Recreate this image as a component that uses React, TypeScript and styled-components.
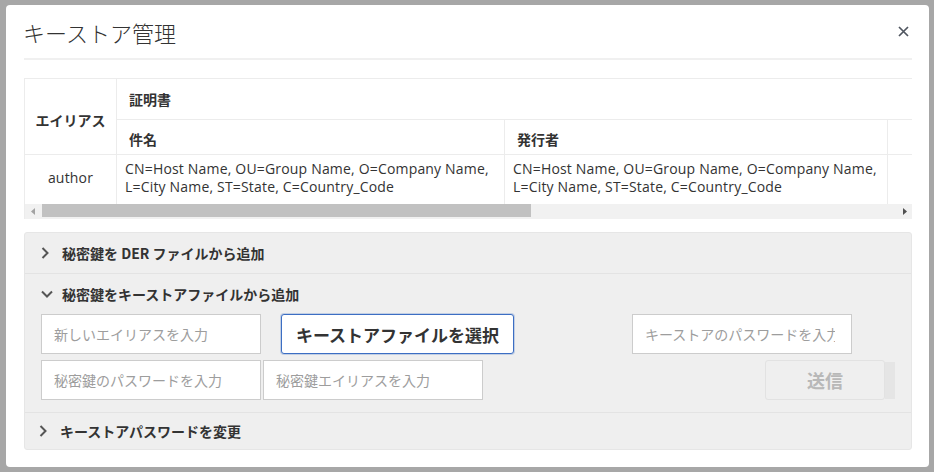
import React from 'react';
import styled, { createGlobalStyle } from 'styled-components';

const GlobalStyle = createGlobalStyle`
  html, body {
    margin: 0;
    padding: 0;
  }
  body {
    width: 934px;
    height: 472px;
    overflow: hidden;
    background: #a7a7a7;
    color: #333333;
    font-family: 'Open Sans', 'Noto Sans CJK JP', sans-serif;
  }
`;

const JP = `'Noto Sans CJK JP', 'Open Sans', sans-serif`;

const Backdrop = styled.div`
  padding: 5px 0 0 6px;
`;

const Modal = styled.div`
  width: 923px;
  height: 462px;
  box-sizing: border-box;
  padding: 0 17px 0 18px;
  background: #ffffff;
  border-radius: 4px;
  display: flex;
  flex-direction: column;
  overflow: hidden;
`;

const Header = styled.div`
  height: 53px;
  display: flex;
  align-items: center;
  justify-content: space-between;
  border-bottom: 2px solid #f0f0f0;
`;

const Title = styled.h2`
  margin: 0 0 0 -1px;
  font-family: ${JP};
  font-size: 22px;
  font-weight: 300;
  color: #333333;
`;

const CloseButton = styled.button`
  display: flex;
  margin-right: 3px;
  padding: 0;
  border: 0;
  background: none;
  cursor: pointer;
`;

const TableViewport = styled.div`
  margin-top: 18px;
  border-top: 1px solid #ececec;
  border-left: 1px solid #ececec;
  overflow: hidden;
`;

const Table = styled.table`
  width: 1560px;
  table-layout: fixed;
  border-collapse: separate;
  border-spacing: 0;
`;

const HeadCell = styled.th<{ $h?: number; $top?: number; $center?: boolean }>`
  height: ${({ $h }) => $h ?? 40}px;
  padding: ${({ $top }) => $top ?? 0}px ${({ $center }) => ($center ? 0 : 12)}px 0;
  box-sizing: content-box;
  border-right: 1px solid #ececec;
  border-bottom: 1px solid #ececec;
  font-family: ${JP};
  font-size: 14px;
  font-weight: 700;
  color: #333333;
  white-space: nowrap;
  text-align: ${({ $center }) => ($center ? 'center' : 'left')};
  vertical-align: middle;
`;

const DataCell = styled.td<{ $center?: boolean }>`
  height: 46px;
  padding: 0 8px 3px;
  border-right: 1px solid #ececec;
  font-size: 14px;
  line-height: 18px;
  letter-spacing: 0.18px;
  color: #333333;
  text-align: ${({ $center }) => ($center ? 'center' : 'left')};
  vertical-align: middle;
`;

const Scrollbar = styled.div`
  display: flex;
  height: 15px;
  background: #f1f1f1;
`;

const ScrollArrow = styled.div`
  width: 15px;
  height: 15px;
  display: flex;
  align-items: center;
  justify-content: center;
  flex-shrink: 0;
`;

const ScrollTrack = styled.div`
  flex: 1;
  display: flex;
`;

const ScrollThumb = styled.div`
  width: 489px;
  height: 13px;
  margin-left: 2px;
  background: #c1c1c1;
`;

const Accordion = styled.div`
  margin-top: 13px;
  background: #efefef;
  border: 1px solid #e6e6e6;
  border-radius: 3px;
  overflow: hidden;
`;

const Item = styled.div<{ $last?: boolean }>`
  border-bottom: ${({ $last }) => ($last ? '0' : '1px solid #e3e3e3')};
`;

const ItemHeader = styled.div<{ $h?: number; $shift?: number }>`
  height: ${({ $h }) => $h ?? 40}px;
  display: flex;
  align-items: center;
  padding-left: ${({ $shift }) => 16 - ($shift ?? 0)}px;
  font-family: ${JP};
  font-size: 14px;
  font-weight: 700;
  color: #333333;
  cursor: pointer;
`;

const Chevron = styled.span`
  width: 21px;
  display: flex;
  align-items: center;
  flex-shrink: 0;
`;

const ItemBody = styled.div`
  padding: 0 16px 12px;
  display: flex;
  flex-direction: column;
  gap: 6px;
`;

const FormRow = styled.div`
  display: flex;
  align-items: center;
`;

const Spacer = styled.div`
  flex: 1;
`;

const TextInput = styled.input<{ $gap?: number; $right?: number }>`
  width: 220px;
  height: 40px;
  box-sizing: border-box;
  margin: 0 ${({ $right }) => $right ?? 0}px 0 ${({ $gap }) => $gap ?? 0}px;
  padding: 0 16px 0 12px;
  border: 1px solid #cccccc;
  border-radius: 0;
  background: #ffffff;
  font-family: ${JP};
  font-size: 14px;
  color: #333333;
  outline: none;

  &::placeholder {
    color: #9d9d9d;
  }
`;

const FileButton = styled.button`
  width: 233px;
  height: 40px;
  margin-left: 20px;
  border: 1px solid #3c6ec3;
  border-radius: 3px;
  box-shadow: 0 0 0 1px rgba(60, 110, 195, 0.25);
  background: #ffffff;
  font-family: ${JP};
  font-size: 17px;
  font-weight: 700;
  color: #333333;
  cursor: pointer;
`;

const SendButton = styled.button`
  width: 120px;
  height: 40px;
  border: 1px solid #e2e2e2;
  border-radius: 3px;
  background: #efefef;
  font-family: ${JP};
  font-size: 18px;
  font-weight: 700;
  color: #b8b8b8;
`;

const ButtonTail = styled.div`
  width: 10px;
  height: 37px;
  background: #e5e5e5;
`;

const subject =
  'CN=Host Name, OU=Group Name, O=Company Name, L=City Name, ST=State, C=Country_Code';

const RightChevron = () => (
  <svg width="8" height="12" viewBox="0 0 8 12">
    <polyline points="1.5,1 6.5,6 1.5,11" fill="none" stroke="#555" strokeWidth="2" />
  </svg>
);

const DownChevron = () => (
  <svg width="12" height="8" viewBox="0 0 12 8">
    <polyline points="1,1.5 6,6.5 11,1.5" fill="none" stroke="#555" strokeWidth="2" />
  </svg>
);

const App = () => (
  <>
    <GlobalStyle />
    <Backdrop>
      <Modal>
        <Header>
          <Title>キーストア管理</Title>
          <CloseButton aria-label="close">
            <svg width="11" height="11" viewBox="0 0 11 11">
              <path d="M1 1 L10 10 M10 1 L1 10" stroke="#505660" strokeWidth="1.7" />
            </svg>
          </CloseButton>
        </Header>

        <TableViewport>
          <Table>
            <colgroup>
              <col style={{ width: 92 }} />
              <col style={{ width: 388 }} />
              <col style={{ width: 383 }} />
              <col />
            </colgroup>
            <thead>
              <tr>
                <HeadCell rowSpan={2} $h={69} $top={6} $center>
                  エイリアス
                </HeadCell>
                <HeadCell colSpan={3}>証明書</HeadCell>
              </tr>
              <tr>
                <HeadCell $h={30} $top={4}>件名</HeadCell>
                <HeadCell $h={30} $top={4}>発行者</HeadCell>
                <HeadCell $h={30} $top={4} />
              </tr>
            </thead>
            <tbody>
              <tr>
                <DataCell $center>author</DataCell>
                <DataCell>{subject}</DataCell>
                <DataCell>{subject}</DataCell>
                <DataCell />
              </tr>
            </tbody>
          </Table>
          <Scrollbar>
            <ScrollArrow>
              <svg width="4" height="7" viewBox="0 0 4 7">
                <polygon points="4,0 0,3.5 4,7" fill="#a3a3a3" />
              </svg>
            </ScrollArrow>
            <ScrollTrack>
              <ScrollThumb />
            </ScrollTrack>
            <ScrollArrow>
              <svg width="4" height="7" viewBox="0 0 4 7">
                <polygon points="0,0 4,3.5 0,7" fill="#505050" />
              </svg>
            </ScrollArrow>
          </Scrollbar>
        </TableViewport>

        <Accordion>
          <Item>
            <ItemHeader>
              <Chevron>
                <RightChevron />
              </Chevron>
              秘密鍵を DER ファイルから追加
            </ItemHeader>
          </Item>
          <Item>
            <ItemHeader>
              <Chevron>
                <DownChevron />
              </Chevron>
              秘密鍵をキーストアファイルから追加
            </ItemHeader>
            <ItemBody>
              <FormRow>
                <TextInput placeholder="新しいエイリアスを入力" />
                <FileButton>キーストアファイルを選択</FileButton>
                <Spacer />
                <TextInput type="password" placeholder="キーストアのパスワードを入力" $right={43} />
              </FormRow>
              <FormRow>
                <TextInput type="password" placeholder="秘密鍵のパスワードを入力" />
                <TextInput placeholder="秘密鍵エイリアスを入力" $gap={2} />
                <Spacer />
                <SendButton disabled>送信</SendButton>
                <ButtonTail />
              </FormRow>
            </ItemBody>
          </Item>
          <Item $last>
            <ItemHeader $h={36} $shift={2}>
              <Chevron>
                <RightChevron />
              </Chevron>
              キーストアパスワードを変更
            </ItemHeader>
          </Item>
        </Accordion>
      </Modal>
    </Backdrop>
  </>
);

export default App;
